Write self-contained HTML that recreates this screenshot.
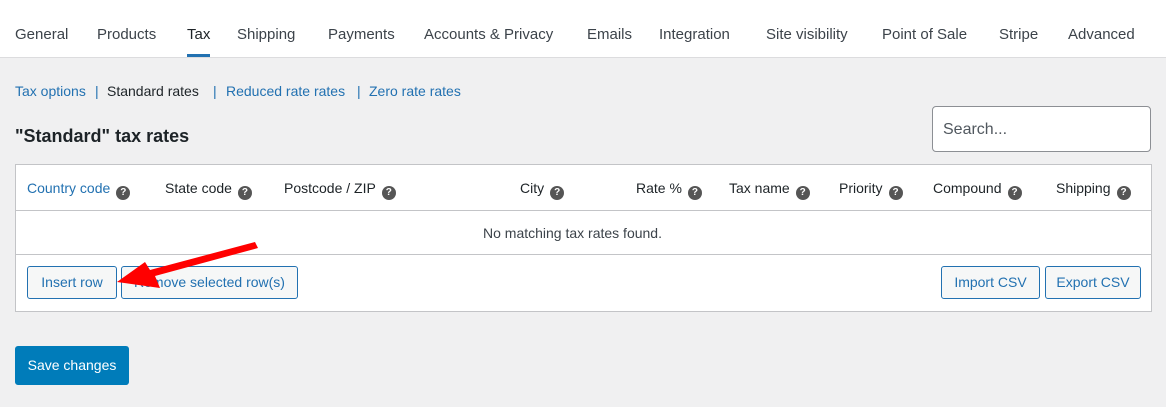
<!DOCTYPE html>
<html><head><style>
body{margin:0;width:1166px;height:407px;background:#f0f0f1;font-family:"Liberation Sans",sans-serif;position:relative;overflow:hidden;color:#1d2327}
.a{position:absolute;white-space:nowrap}
.top{position:absolute;left:0;top:0;width:1166px;height:57px;background:#fff;border-bottom:1px solid #dcdcde}
.tab{position:absolute;top:26px;font-size:15px;color:#3c434a}
.lk{color:#2271b1;font-size:14px;top:83px}
.th{top:180px;font-size:14px;color:#1d2327}
.q{display:inline-block;width:14px;height:14px;border-radius:50%;background:#555;color:#fff;font-size:10px;line-height:14px;text-align:center;font-weight:bold;vertical-align:-2px;margin-left:6px}
.btn{position:absolute;top:266px;height:31px;border:1px solid #2271b1;border-radius:3px;background:#f6f7f7;color:#2271b1;font-size:14px;line-height:31px;text-align:center;box-sizing:content-box}
</style></head><body>
<div class="top"></div>
<div class="a tab" style="left:15px">General</div>
<div class="a tab" style="left:97px">Products</div>
<div class="a tab" style="left:187px;color:#1d2327">Tax</div>
<div class="a" style="left:187px;top:54px;width:23px;height:3px;background:#2271b1"></div>
<div class="a tab" style="left:237px">Shipping</div>
<div class="a tab" style="left:328px">Payments</div>
<div class="a tab" style="left:424px">Accounts &amp; Privacy</div>
<div class="a tab" style="left:587px">Emails</div>
<div class="a tab" style="left:659px">Integration</div>
<div class="a tab" style="left:766px">Site visibility</div>
<div class="a tab" style="left:882px">Point of Sale</div>
<div class="a tab" style="left:999px">Stripe</div>
<div class="a tab" style="left:1068px">Advanced</div>

<div class="a lk" style="left:15px">Tax options</div>
<div class="a lk" style="left:95px">|</div>
<div class="a" style="left:107px;top:83px;font-size:14px;color:#1d2327">Standard rates</div>
<div class="a lk" style="left:213px">|</div>
<div class="a lk" style="left:226px">Reduced rate rates</div>
<div class="a lk" style="left:357px">|</div>
<div class="a lk" style="left:369px">Zero rate rates</div>

<div class="a" style="left:15px;top:126px;font-size:18px;font-weight:bold">"Standard" tax rates</div>
<div class="a" style="left:932px;top:106px;width:217px;height:44px;background:#fff;border:1px solid #8c8f94;border-radius:4px"></div>
<div class="a" style="left:943px;top:121px;font-size:16px;color:#50575e">Search...</div>

<div class="a" style="left:15px;top:164px;width:1135px;height:146px;background:#fff;border:1px solid #c3c4c7"></div>
<div class="a" style="left:16px;top:210px;width:1135px;height:1px;background:#c3c4c7"></div>
<div class="a" style="left:16px;top:254px;width:1135px;height:1px;background:#c3c4c7"></div>
<div class="a th" style="left:27px;color:#2271b1">Country code<span class="q">?</span></div>
<div class="a th" style="left:165px">State code<span class="q">?</span></div>
<div class="a th" style="left:284px">Postcode / ZIP<span class="q">?</span></div>
<div class="a th" style="left:520px">City<span class="q">?</span></div>
<div class="a th" style="left:636px">Rate %<span class="q">?</span></div>
<div class="a th" style="left:729px">Tax name<span class="q">?</span></div>
<div class="a th" style="left:839px">Priority<span class="q">?</span></div>
<div class="a th" style="left:933px">Compound<span class="q">?</span></div>
<div class="a th" style="left:1056px">Shipping<span class="q">?</span></div>
<div class="a" style="left:483px;top:225px;font-size:14px;color:#3c434a">No matching tax rates found.</div>

<div class="btn" style="left:27px;width:88px">Insert row</div>
<div class="btn" style="left:121px;width:175px">Remove selected row(s)</div>
<div class="btn" style="left:941px;width:97px">Import CSV</div>
<div class="btn" style="left:1045px;width:94px">Export CSV</div>
<svg class="a" style="left:100px;top:238px" width="170" height="60"><polygon points="155,4 158,10 55,38 60,50 17,44 45,24 50,32" fill="#f00"/></svg>

<div class="a" style="left:15px;top:346px;width:114px;height:39px;background:#007cba;border-radius:3px;color:#fff;font-size:14px;line-height:39px;text-align:center">Save changes</div>
</body></html>
